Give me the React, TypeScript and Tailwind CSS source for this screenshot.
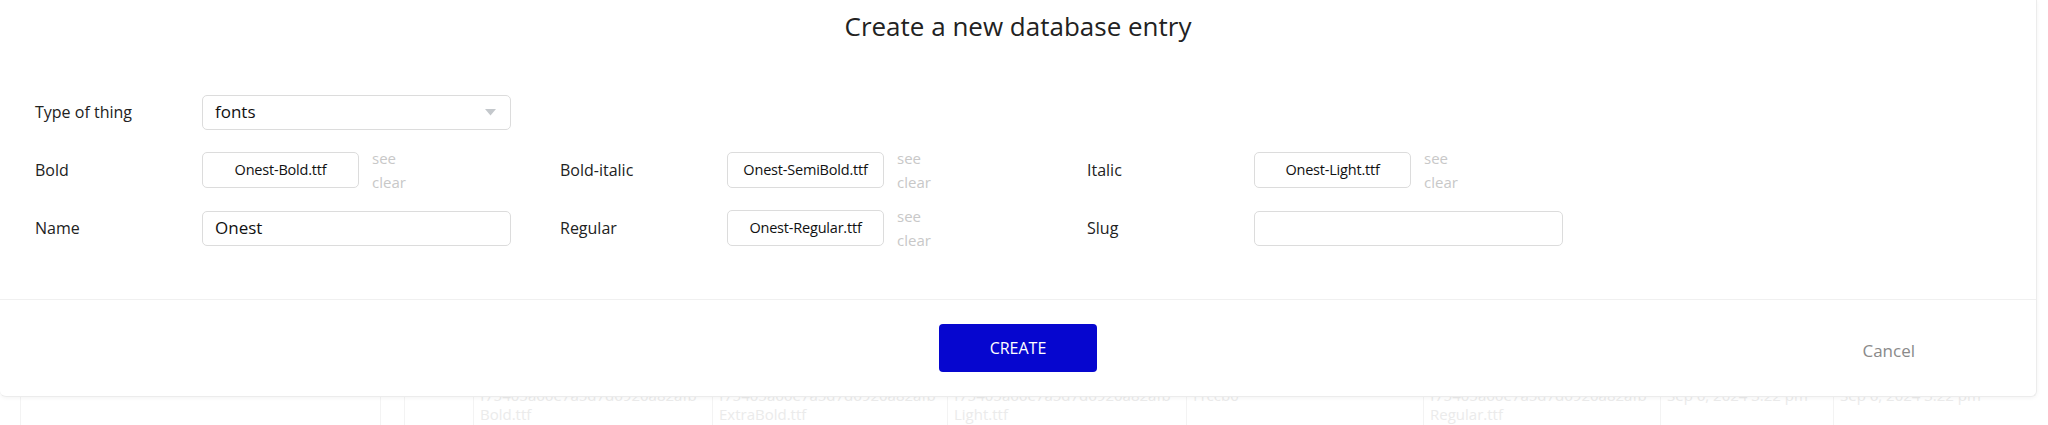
import { ReactNode } from "react";

const font = { fontFamily: '"Open Sans", "Noto Sans", sans-serif' };

function Field({ label, children }: { label: string; children?: ReactNode }) {
  return (
    <div className="flex h-[58px] items-center">
      <div className="w-[167px] text-[16px] text-[#222]">{label}</div>
      {children}
    </div>
  );
}

function FileInput({ name }: { name: string }) {
  return (
    <div className="flex items-center">
      <div className="flex h-[36px] w-[157px] items-center justify-center rounded-[5px] border border-[#dcdcdc] text-[14.5px] tracking-[-0.2px] text-[#111]">
        {name}
      </div>
      <div className="ml-[13px] flex flex-col text-[15px] leading-[24px] text-[#c8c8c8]">
        <span>see</span>
        <span>clear</span>
      </div>
    </div>
  );
}

function TextInput({ value = "" }: { value?: string }) {
  return (
    <div className="flex h-[35px] w-[309px] items-center rounded-[5px] border border-[#dcdcdc] px-[12px] text-[17px] text-[#111]">
      {value}
    </div>
  );
}

function BackgroundTable() {
  const cell = "border-l border-[#f3f3f3] pl-[6px] overflow-hidden whitespace-nowrap";
  const hash = "f75405a66e7a5d7d6920a82afb";
  return (
    <div className="flex h-full pt-[386px] text-[15px] leading-[19px] text-[#ebebeb]">
      <div className="ml-[20px] w-[360px] border-l border-[#f3f3f3]" />
      <div className="w-[24px] border-l border-[#f3f3f3]" />
      <div className="grid grid-cols-[69px_239px_235px_239px_237px_237px_173px_172px]">
        <div className="border-l border-[#f3f3f3]" />
        <div className={cell + " pl-0"}>{hash}<br />Bold.ttf</div>
        <div className={cell}>{hash}<br />ExtraBold.ttf</div>
        <div className={cell}>{hash}<br />Light.ttf</div>
        <div className={cell}>f1ccb0</div>
        <div className={cell}>{hash}<br />Regular.ttf</div>
        <div className={cell}>Sep 6, 2024 3:22 pm</div>
        <div className={cell}>Sep 6, 2024 3:22 pm</div>
      </div>
    </div>
  );
}

export default function App() {
  return (
    <div className="relative h-[425px] w-[2048px] overflow-hidden bg-white" style={font}>
      <BackgroundTable />

      <div className="absolute left-0 top-0 flex h-[397px] w-[2037px] flex-col rounded-b-[6px] border-b border-r border-[#ececec] bg-white shadow-[0_1px_4px_rgba(0,0,0,0.05)]">
        <div className="flex h-[52px] items-center justify-center text-[26px] text-[#222]">
          Create a new database entry
        </div>

        <div className="flex-1 pl-[35px] pt-[31px]">
          <div className="grid grid-cols-[525px_527px_525px]">
            <Field label="Type of thing">
              <div className="flex h-[35px] w-[309px] items-center justify-between rounded-[5px] border border-[#dcdcdc] pl-[12px] pr-[14px] text-[17px] text-[#111]">
                fonts
                <svg width="11" height="7" viewBox="0 0 11 7">
                  <path d="M0 0h11L5.5 6.5z" fill="#c4c8cc" />
                </svg>
              </div>
            </Field>
            <div />
            <div />

            <Field label="Bold">
              <FileInput name="Onest-Bold.ttf" />
            </Field>
            <Field label="Bold-italic">
              <FileInput name="Onest-SemiBold.ttf" />
            </Field>
            <Field label="Italic">
              <FileInput name="Onest-Light.ttf" />
            </Field>

            <Field label="Name">
              <TextInput value="Onest" />
            </Field>
            <Field label="Regular">
              <FileInput name="Onest-Regular.ttf" />
            </Field>
            <Field label="Slug">
              <TextInput />
            </Field>
          </div>
        </div>

        <div className="grid h-[97px] grid-cols-[1fr_auto_1fr] items-center border-t border-[#f0f0f0]">
          <div />
          <button className="flex h-[48px] w-[158px] items-center justify-center rounded-[4px] bg-[#0606cf] text-[16px] text-white">
            CREATE
          </button>
          <div className="flex justify-end pr-[121px] pt-[5px] text-[17px] text-[#8a8a8a]">Cancel</div>
        </div>
      </div>
    </div>
  );
}
